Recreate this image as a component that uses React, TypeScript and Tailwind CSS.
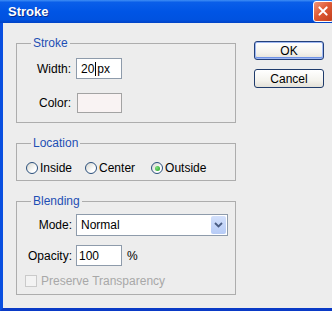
import React from "react";

function Group({ title, children }: { title: string; children: React.ReactNode }) {
  return (
    <div className="border border-[#adadad]">
      <div className="-mt-[8px] ml-[14px] px-[2px] w-fit bg-[#ededed] text-[#1e4fb4]">{title}</div>
      {children}
    </div>
  );
}

function Radio({ label, checked }: { label: string; checked?: boolean }) {
  return (
    <div className="flex items-center">
      <span className="w-[12px] h-[12px] rounded-full border border-[#2a4f7c] bg-[linear-gradient(135deg,#d6d6ce,#ffffff_70%)] flex items-center justify-center">
        {checked && (
          <span className="w-[5px] h-[5px] rounded-full bg-[radial-gradient(circle_at_35%_35%,#7fe07f,#1f9e1f)]" />
        )}
      </span>
      <span className="ml-[2px]">{label}</span>
    </div>
  );
}

function XPButton({ label, def }: { label: string; def?: boolean }) {
  return (
    <div
      className={
        "w-[70px] h-[19px] rounded-[3px] border flex items-center justify-center bg-[linear-gradient(to_bottom,#ffffff,#f4f3ee_60%,#e3e1d8)] " +
        (def
          ? "border-[#23407a] shadow-[inset_0_0_0_1px_#9fb8f2,inset_0_-1px_0_1px_#6f93e6]"
          : "border-[#1f3b6b]")
      }
    >
      {label}
    </div>
  );
}

export default function App() {
  return (
    <div className="w-[332px] h-[311px] overflow-hidden flex flex-col font-['Liberation_Sans',Arial,sans-serif] text-[12px] leading-[14px] text-black">
      <div className="h-[23px] shrink-0 flex items-center pl-[8px] bg-[linear-gradient(to_bottom,#3f8ef5_0%,#0a5ee9_10%,#0055e5_50%,#0052e0_85%,#0042c6_100%)]">
        <span className="text-white font-bold text-[13px] [text-shadow:1px_1px_0_#0b2a8c]">Stroke</span>
        <div className="ml-auto mr-[-2px] w-[21px] h-[21px] rounded-[3px] border border-white bg-[linear-gradient(135deg,#f0957a,#df5a35_45%,#c13e1c)] flex items-center justify-center">
          <svg width="21" height="21" viewBox="0 0 21 21">
            <path d="M6 6 L14 14 M14 6 L6 14" stroke="white" strokeWidth="2.2" strokeLinecap="round" />
          </svg>
        </div>
      </div>
      <div className="flex-1 flex bg-[#ededed] border-l-[3px] border-l-[#0a4fe0] border-b-[3px] border-b-[#0a3ac6] pl-[13px]">
        <div className="w-[220px] mt-[20px] flex flex-col gap-[20px]">
          <Group title="Stroke">
            <div className="mt-[8px] flex items-center">
              <span className="w-[54px] text-right">Width:</span>
              <div className="ml-[5px] w-[46px] h-[21px] border border-[#8e9bab] bg-white flex items-center pl-[4px]">
                20
                <span className="inline-block w-[1px] h-[14px] bg-black mx-[1px]" />
                px
              </div>
            </div>
            <div className="mt-[14px] pb-[9px] flex items-center">
              <span className="w-[54px] text-right">Color:</span>
              <div className="ml-[6px] w-[45px] h-[20px] border border-[#a3a3a3] bg-[#f9f3f3]" />
            </div>
          </Group>
          <Group title="Location">
            <div className="mt-[11px] pb-[5px] pl-[9px] flex items-center">
              <Radio label="Inside" />
              <div className="ml-[13px]">
                <Radio label="Center" />
              </div>
              <div className="ml-[16px]">
                <Radio label="Outside" checked />
              </div>
            </div>
          </Group>
          <Group title="Blending">
            <div className="mt-[6px] flex items-center">
              <span className="w-[55px] text-right">Mode:</span>
              <div className="ml-[4px] w-[152px] h-[22px] border border-[#8e9bab] bg-white flex items-center justify-between pl-[4px] pr-[1px]">
                <span>Normal</span>
                <div className="w-[15px] h-[18px] rounded-[2px] bg-[linear-gradient(to_bottom,#d3e0fb,#b6cbf6)] flex items-center justify-center">
                  <svg width="9" height="6" viewBox="0 0 9 6">
                    <path d="M1 1 L4.5 4.5 L8 1" stroke="#4a5d83" strokeWidth="1.8" fill="none" />
                  </svg>
                </div>
              </div>
            </div>
            <div className="mt-[9px] flex items-center">
              <span className="w-[55px] text-right">Opacity:</span>
              <div className="ml-[4px] w-[46px] h-[21px] border border-[#8e9bab] bg-white flex items-center pl-[2px]">100</div>
              <span className="ml-[5px]">%</span>
            </div>
            <div className="mt-[8px] pb-[6px] pl-[8px] flex items-center">
              <span className="w-[12px] h-[12px] border border-[#cacaca] bg-[#f3f3f3]" />
              <span className="ml-[4px] text-[#a8a8a8]">Preserve Transparency</span>
            </div>
          </Group>
        </div>
        <div className="ml-[18px] mt-[18px] flex flex-col gap-[9px]">
          <XPButton label="OK" def />
          <XPButton label="Cancel" />
        </div>
      </div>
    </div>
  );
}
